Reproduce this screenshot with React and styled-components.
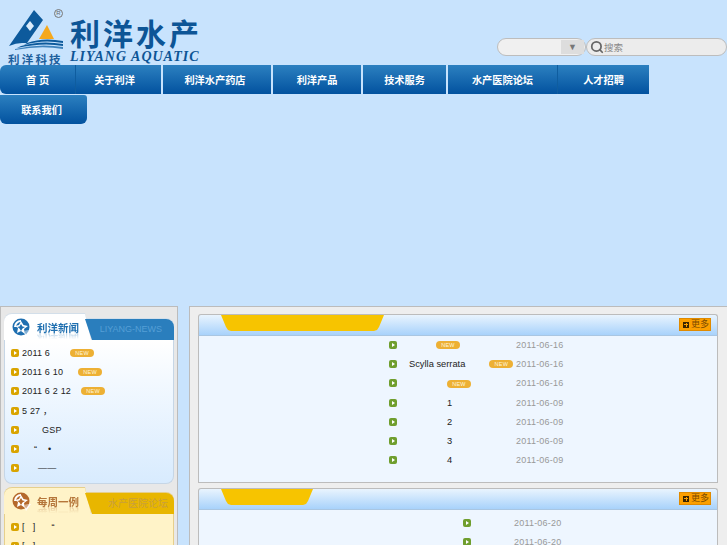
import React from 'react';
import styled, { createGlobalStyle } from 'styled-components';
import { Search } from 'lucide-react';

const CJK = '"Liberation Sans", "Noto Sans CJK SC", sans-serif';

const navItems = [
  { label: '首 页', width: 76, join: true },
  { label: '关于利洋', width: 85, shift: 8 },
  { label: '利洋水产药店', width: 108, shift: 4 },
  { label: '利洋产品', width: 88 },
  { label: '技术服务', width: 83 },
  { label: '水产医院论坛', width: 110, join: true },
  { label: '人才招聘', width: 91 },
];

const newsItems = [
  { text: '2011 6', badge: 20 },
  { text: '2011 6 10', badge: 15 },
  { text: '2011 6 2 12', badge: 10 },
  { text: '5 27 ，' },
  { text: 'GSP', pad: 20 },
  { text: '“    •', pad: 12 },
  { text: '——', pad: 16 },
];

const caseItems = [
  { text: '[   ]', tail: '“' },
  { text: '[   ]' },
];

const firstList = [
  { pad: 27, badge: true, date: '2011-06-16' },
  { title: 'Scylla serrata', badge: true, gap: 24, date: '2011-06-16' },
  { pad: 38, badge: true, date: '2011-06-16' },
  { title: '1', pad: 38, date: '2011-06-09' },
  { title: '2', pad: 38, date: '2011-06-09' },
  { title: '3', pad: 38, date: '2011-06-09' },
  { title: '4', pad: 38, date: '2011-06-09' },
];

const secondList = [{ date: '2011-06-20' }, { date: '2011-06-20' }];

function Logo() {
  return (
    <svg width="56" height="40" viewBox="0 0 56 40">
      <path d="M27 0 L36 10 L20 33 L15 33 Q9 33 2 36 Z" fill="#0d5a9c" />
      <path d="M23 11 L27 16 L23 21 L19 16 Z" fill="#dcecfb" />
      <path d="M32 29 L40 15 L47 29 Z" fill="#f5a81c" />
      <path d="M20 33 Q36 27 56 31 L56 33 Q36 29 17 35 Z" fill="#0d5a9c" />
      <path d="M14 36 Q34 30 56 34 L56 36 Q36 32 10 38 Z" fill="#0d5a9c" />
      <path d="M8 39 Q32 33 56 37 L56 39 Q34 35 8 40 Z" fill="#3f83bd" />
    </svg>
  );
}

function SectionIcon({ color }) {
  return (
    <svg width="19" height="19" viewBox="0 0 19 19">
      <circle cx="9" cy="9" r="8.5" fill={color} />
      <path d="M2 9 A7 7 0 0 1 9 2 L9 4 A5 5 0 0 0 4 9 Z" fill="#fff" />
      <path d="M9 3 L11.5 7 L16 8 L12 11 L13 16 L9 13 L5 15 L6 10 L3 8 L7 7 Z" fill="#fff" />
      <path d="M9 6 L10.5 8.5 L13 9 L10.5 10.5 L9 13 L7.5 10.5 L5.5 9 L7.5 8.5 Z" fill={color} />
      <path d="M12 13 L19 12 L14 19 Z" fill="#fff" />
      <path d="M12 13 L17 12.5 L14 16.5 Z" fill={color} opacity="0.55" />
    </svg>
  );
}

function NewBadge({ $gap }) {
  return <Badge $gap={$gap}>NEW</Badge>;
}

export default function App() {
  return (
    <>
      <GlobalStyle />
      <Header>
        <LogoBlock>
          <LogoMark>
            <Logo />
            <LogoSmall>利洋科技</LogoSmall>
            <Registered>R</Registered>
          </LogoMark>
          <LogoText>
            <LogoTitle>利洋水产</LogoTitle>
            <LogoLatin>LIYANG AQUATIC</LogoLatin>
          </LogoText>
        </LogoBlock>
        <SearchArea>
          <SelectBox>
            <SelectArrow>▼</SelectArrow>
          </SelectBox>
          <SearchBox>
            <Search size={14} strokeWidth={3} color="#666" />
            <span>搜索</span>
          </SearchBox>
        </SearchArea>
      </Header>

      <Nav>
        {navItems.map((item, i) => (
          <NavItem key={item.label} $width={item.width} $join={item.join} $shift={item.shift} $first={i === 0}>
            {item.label}
          </NavItem>
        ))}
        <NavItem $width={87} $shift={4} $last>联系我们</NavItem>
      </Nav>

      <Main>
        <Sidebar>
          <SideCard>
            <SideHead>
              <SideTab>
                <SectionIcon color="#1f6fb0" />
                <SideTitle>利洋新闻</SideTitle>
              </SideTab>
              <SideLabel>LIYANG-NEWS</SideLabel>
            </SideHead>
            <SideBody>
              {newsItems.map((item) => (
                <SideRow key={item.text}>
                  <Bullet $color="#d9a400" />
                  <SideText $pad={item.pad}>{item.text}</SideText>
                  {item.badge && <NewBadge $gap={item.badge} />}
                </SideRow>
              ))}
            </SideBody>
          </SideCard>

          <SideCard $warm>
            <SideHead $warm>
              <SideTab $warm>
                <SectionIcon color="#b5692b" />
                <SideTitle $warm>每周一例</SideTitle>
              </SideTab>
              <SideLabel $warm>水产医院论坛</SideLabel>
            </SideHead>
            <SideBody $warm>
              {caseItems.map((item, i) => (
                <SideRow key={i}>
                  <Bullet $color="#d9a400" />
                  <SideText>{item.text}</SideText>
                  {item.tail && <SideTail>{item.tail}</SideTail>}
                </SideRow>
              ))}
            </SideBody>
          </SideCard>
        </Sidebar>

        <Content>
          <Panel>
            <PanelHead>
              <PanelTab $width={163} />
              <MoreButton><PlusMark />更多</MoreButton>
            </PanelHead>
            <PanelBody $left={190} $height={146}>
              {firstList.map((row, i) => (
                <ListRow key={i}>
                  <Bullet $color="#6f9e2e" />
                  <ListTitle $pad={row.pad} $width={107}>
                    {row.title}
                    {row.badge && <NewBadge $gap={row.gap || 0} />}
                  </ListTitle>
                  <ListDate>{row.date}</ListDate>
                </ListRow>
              ))}
            </PanelBody>
          </Panel>
          <Panel>
            <PanelHead>
              <PanelTab $width={92} />
              <MoreButton><PlusMark />更多</MoreButton>
            </PanelHead>
            <PanelBody $left={264} $top={4}>
              {secondList.map((row, i) => (
                <ListRow key={i}>
                  <Bullet $color="#6f9e2e" />
                  <ListTitle $width={31} />
                  <ListDate>{row.date}</ListDate>
                </ListRow>
              ))}
            </PanelBody>
          </Panel>
        </Content>
      </Main>
    </>
  );
}

const GlobalStyle = createGlobalStyle`
  html, body {
    margin: 0;
    height: 545px;
    overflow: hidden;
    background: #c8e3fd;
    font-family: ${CJK};
  }
`;

const Header = styled.header`
  height: 65px;
  display: flex;
  justify-content: space-between;
`;

const LogoBlock = styled.div`
  display: flex;
  padding: 10px 0 0 7px;
  color: #0d4f8f;
`;

const LogoMark = styled.div`
  position: relative;
  width: 56px;
`;

const LogoSmall = styled.div`
  font-size: 11.5px;
  line-height: 12px;
  font-weight: 700;
  letter-spacing: 2.2px;
  white-space: nowrap;
  color: #1d5f9d;
  margin-left: 1px;
`;

const Registered = styled.span`
  position: absolute;
  top: -1px;
  left: 47px;
  width: 7px;
  height: 7px;
  border: 1px solid #777;
  border-radius: 50%;
  color: #666;
  font-size: 6px;
  line-height: 7px;
  text-align: center;
`;

const LogoText = styled.div`
  margin: 9px 0 0 7px;
`;

const LogoTitle = styled.div`
  font-size: 30px;
  line-height: 32px;
  font-weight: 700;
  letter-spacing: 3px;
  white-space: nowrap;
  color: #0d5596;
`;

const LogoLatin = styled.div`
  font-family: "Liberation Serif", serif;
  font-style: italic;
  font-weight: 700;
  font-size: 14px;
  line-height: 12px;
  letter-spacing: 1px;
  white-space: nowrap;
  color: #0d5596;
`;

const SearchArea = styled.div`
  display: flex;
  align-items: flex-start;
  padding-top: 38px;
`;

const SelectBox = styled.div`
  width: 89px;
  height: 18px;
  box-sizing: border-box;
  border: 1px solid #bdbdbd;
  border-radius: 9px;
  background: #f0f0f0;
  display: flex;
  justify-content: flex-end;
  padding-right: 1px;
`;

const SelectArrow = styled.div`
  width: 23px;
  height: 14px;
  margin: 1px 0 0;
  background: #dddddd;
  color: #777;
  font-size: 9px;
  line-height: 14px;
  text-align: center;
`;

const SearchBox = styled.div`
  width: 141px;
  height: 18px;
  box-sizing: border-box;
  border: 1px solid #bdbdbd;
  border-radius: 9px;
  background: #ececec;
  display: flex;
  align-items: center;
  gap: 0;
  padding-left: 3px;
  color: #888;
  font-size: 9.5px;
`;

const Nav = styled.nav`
  display: flex;
  flex-wrap: wrap;
  width: 660px;
`;

const NavItem = styled.a`
  width: ${(p) => p.$width}px;
  height: 29px;
  margin: 0 ${(p) => (p.$join ? 0 : 2)}px 1px 0;
  padding-right: ${(p) => p.$shift || 0}px;
  box-sizing: border-box;
  display: flex;
  align-items: center;
  justify-content: center;
  background: linear-gradient(#2c80c0, #02529f);
  color: #fff;
  font-size: 10.2px;
  font-weight: 700;
  border-radius: ${(p) => (p.$first ? '6px 0 0 6px' : p.$last ? '0 3px 6px 6px' : '0')};
  border-right: ${(p) => (p.$join ? '1px solid #0f5d9f' : '0')};
`;

const Main = styled.main`
  display: flex;
  align-items: flex-start;
  margin-top: 181px;
  gap: 11px;
`;

const Sidebar = styled.aside`
  width: 178px;
  height: 300px;
  flex: none;
  box-sizing: border-box;
  padding: 7px 3px 0;
  background: #e8e8e8;
  border: 1px solid #bcbcbc;
`;

const SideCard = styled.section`
  height: ${(p) => (p.$warm ? 'auto' : '170px')};
  margin-bottom: 4px;
  display: flex;
  flex-direction: column;
`;

const SideHead = styled.div`
  display: flex;
  align-items: flex-end;
  height: 26px;
  flex: none;
  filter: drop-shadow(0 -1px 0 ${(p) => (p.$warm ? '#e6cf8c' : '#d3dfea')});
`;

const SideTab = styled.div`
  width: 87px;
  height: 26px;
  flex: none;
  box-sizing: border-box;
  display: flex;
  align-items: center;
  gap: 6px;
  padding: 1px 0 0 8px;
  background: ${(p) => (p.$warm ? '#fff3c8' : '#fff')};
  border-radius: 8px 6px 0 0;
  clip-path: polygon(0 0, 81px 0, 100% 100%, 0 100%);
`;

const SideTitle = styled.span`
  color: ${(p) => (p.$warm ? '#b5763a' : '#1f6fb0')};
  font-size: 10.5px;
  font-weight: 700;
  white-space: nowrap;
  -webkit-box-reflect: below -4px linear-gradient(transparent 45%, rgba(255, 255, 255, 0.45));
`;

const SideLabel = styled.div`
  flex: 1;
  height: 21px;
  margin-left: -6px;
  box-sizing: border-box;
  clip-path: polygon(0 0, 100% 0, 100% 100%, 7px 100%);
  background: ${(p) => (p.$warm ? '#e8b600' : '#2a7ebd')};
  border-radius: 0 8px 0 0;
  color: ${(p) => (p.$warm ? '#c99f3c' : '#559fd6')};
  font-size: ${(p) => (p.$warm ? '10px' : '9px')};
  line-height: 21px;
  text-align: right;
  padding-right: ${(p) => (p.$warm ? '6px' : '12px')};
  white-space: nowrap;
`;

const SideBody = styled.div`
  flex: 1;
  box-sizing: border-box;
  padding-top: 3px;
  background: ${(p) => (p.$warm ? '#fff3c8' : 'linear-gradient(#ffffff 0, #f3f9ff 40px, #d8ebfe 100%)')};
  border: 1px solid ${(p) => (p.$warm ? '#e6cf8c' : '#c6d6e6')};
  border-top: 0;
  border-radius: 0 0 8px 8px;
`;

const SideRow = styled.div`
  height: 19.3px;
  display: flex;
  align-items: center;
  padding-left: 6px;
  white-space: pre;
`;

const Bullet = styled.i`
  position: relative;
  display: block;
  width: 8px;
  height: 8px;
  flex: none;
  border-radius: 2px;
  background: ${(p) => p.$color};
  &::after {
    content: '';
    position: absolute;
    left: 3px;
    top: 2px;
    border-left: 3px solid #fff;
    border-top: 2px solid transparent;
    border-bottom: 2px solid transparent;
  }
`;

const SideText = styled.span`
  margin-left: ${(p) => 3 + (p.$pad || 0)}px;
  color: #222;
  font-size: 9px;
  letter-spacing: 0.2px;
`;

const SideTail = styled.span`
  margin-left: 16px;
  color: #222;
  font-size: 9px;
`;

const Badge = styled.span`
  display: inline-block;
  margin-left: ${(p) => p.$gap}px;
  width: 24px;
  height: 8px;
  border-radius: 4px;
  background: #edb034;
  color: #fff6dc;
  font-size: 5.5px;
  line-height: 8px;
  letter-spacing: 0.3px;
  text-align: center;
  vertical-align: middle;
`;

const Content = styled.div`
  flex: 1;
  height: 300px;
  box-sizing: border-box;
  padding: 7px 9px 0 8px;
  background: #eeeeee;
  border: 1px solid #bcbcbc;
  border-right: 0;
`;

const Panel = styled.section`
  margin-bottom: 5px;
`;

const PanelHead = styled.div`
  height: 20px;
  display: flex;
  justify-content: space-between;
  align-items: flex-start;
  background: linear-gradient(#e9f4fe, #a8d2fb);
  border: 1px solid #bcbcbc;
  border-bottom: 1px solid #a9c6e2;
  border-radius: 3px 3px 0 0;
`;

const PanelTab = styled.div`
  width: ${(p) => p.$width}px;
  height: 16px;
  margin-left: 22px;
  background: #f7c400;
  clip-path: polygon(
    0 0,
    100% 0,
    calc(100% - 5px) 12px,
    calc(100% - 7px) 15px,
    calc(100% - 10px) 100%,
    10px 100%,
    7px 15px,
    5px 12px
  );
`;

const MoreButton = styled.div`
  width: 32px;
  height: 13px;
  margin: 3px 6px 0 0;
  box-sizing: border-box;
  display: flex;
  align-items: center;
  gap: 2px;
  padding-left: 3px;
  background: #fc9f00;
  border: 1px solid #e08a00;
  color: #7a4a00;
  font-size: 9px;
  line-height: 11px;
  white-space: nowrap;
`;

const PlusMark = styled.i`
  position: relative;
  display: block;
  width: 6px;
  height: 6px;
  flex: none;
  background: #3a2500;
  &::before {
    content: '';
    position: absolute;
    left: 1px;
    top: 2.5px;
    width: 4px;
    height: 1px;
    background: #fc9f00;
  }
  &::after {
    content: '';
    position: absolute;
    left: 2.5px;
    top: 1px;
    width: 1px;
    height: 4px;
    background: #fc9f00;
  }
`;

const PanelBody = styled.div`
  height: ${(p) => (p.$height ? `${p.$height}px` : 'auto')};
  padding: ${(p) => p.$top || 0}px 0 0 ${(p) => p.$left}px;
  background: #eef6ff;
  border: 1px solid #bcbcbc;
  border-top: 0;
`;

const ListRow = styled.div`
  height: 19.3px;
  box-sizing: border-box;
  padding-bottom: 2px;
  display: flex;
  align-items: center;
  white-space: nowrap;
`;

const ListTitle = styled.div`
  width: ${(p) => p.$width}px;
  box-sizing: border-box;
  padding-left: ${(p) => (p.$pad || 0) + 12}px;
  color: #222;
  font-size: 9.3px;
  flex: none;
`;

const ListDate = styled.div`
  margin-left: 12px;
  color: #999;
  font-size: 9px;
  letter-spacing: 0.2px;
`;
